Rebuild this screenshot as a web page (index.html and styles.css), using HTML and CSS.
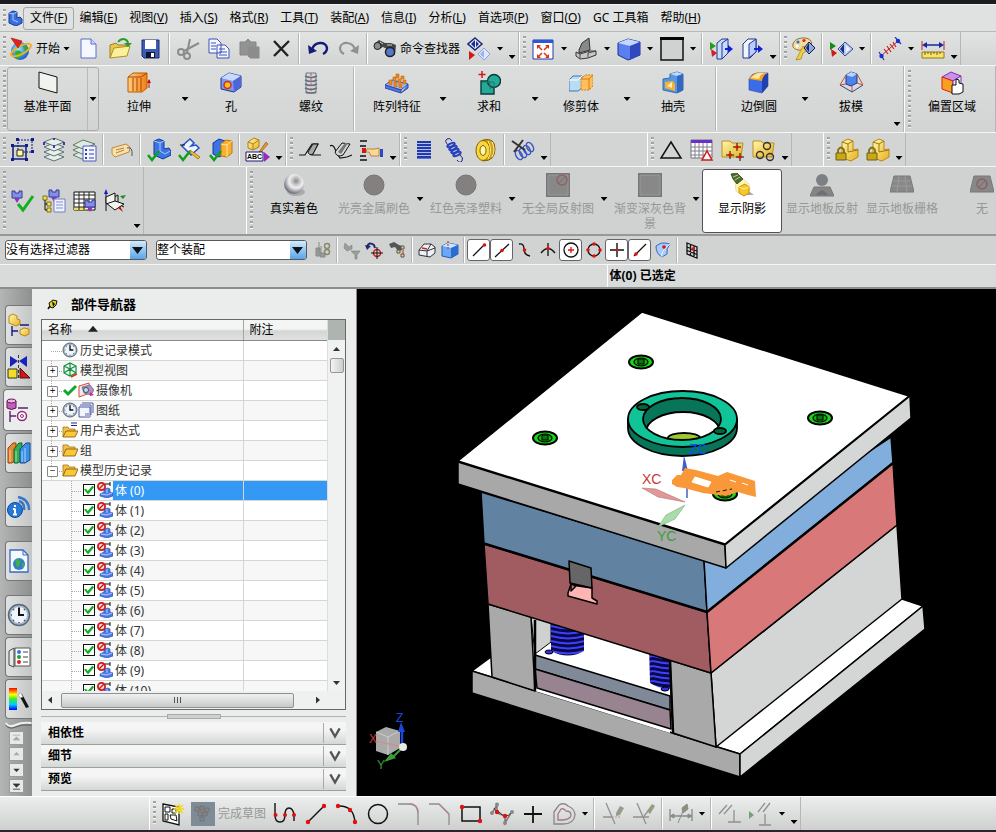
FILE: index.html
```html
<!DOCTYPE html>
<html lang="zh-CN">
<head>
<meta charset="utf-8">
<title>部件导航器</title>
<link rel="stylesheet" href="styles.css">
</head>
<body>
<svg class="sprite" aria-hidden="true">
<defs>
<linearGradient id="gBlue" x1="0" y1="0" x2="1" y2="1"><stop offset="0" stop-color="#b9d2ff"/><stop offset="1" stop-color="#2c50d8"/></linearGradient>
<linearGradient id="gGold" x1="0" y1="0" x2="1" y2="1"><stop offset="0" stop-color="#fff7b0"/><stop offset="1" stop-color="#e8b020"/></linearGradient>
<linearGradient id="gOrange" x1="0" y1="0" x2="1" y2="0"><stop offset="0" stop-color="#ffd080"/><stop offset="1" stop-color="#f08010"/></linearGradient>
<radialGradient id="gBall" cx=".6" cy=".35" r=".7"><stop offset="0" stop-color="#888"/><stop offset=".3" stop-color="#ccc"/><stop offset=".5" stop-color="#f0f0f0"/><stop offset="1" stop-color="#556"/></radialGradient>
<radialGradient id="gGlobe" cx=".4" cy=".4" r=".7"><stop offset="0" stop-color="#9fe8ff"/><stop offset="1" stop-color="#0848c8"/></radialGradient>
<linearGradient id="gRain" x1="0" y1="0" x2="0" y2="1"><stop offset="0" stop-color="#f00"/><stop offset=".3" stop-color="#ff0"/><stop offset=".5" stop-color="#3e3"/><stop offset=".75" stop-color="#0cf"/><stop offset="1" stop-color="#00f"/></linearGradient>
</defs>
<symbol id="app" viewBox="0 0 16 16"><path d="M2 3l4-2 4 1v6l3-1 2 2v4l-6 3-7-3z" fill="#3c6ee0" stroke="#123a98"/><path d="M2 3l4 1v6l5 2M6 4l4-2" fill="none" stroke="#a8c8ff"/></symbol>
<symbol id="start" viewBox="0 0 24 24"><circle cx="11" cy="14" r="9" fill="url(#gGlobe)"/><path d="M6 15c3-3 7-1 7 2s-4 6-6 4zM14 8l4 2 1 5-4-2z" fill="#27b32a"/><ellipse cx="12" cy="13" rx="11" ry="4" transform="rotate(-28 12 13)" fill="none" stroke="#f0b020" stroke-width="2"/><path d="M2 1l11 3-4 7z" fill="#e02418" stroke="#a01010" stroke-width=".6"/></symbol>
<symbol id="new" viewBox="0 0 24 24"><path d="M4 2h10l5 5v14H4z" fill="#f4f7ff" stroke="#5a6ec8"/><path d="M14 2v5h5" fill="#ccd8ff" stroke="#5a6ec8"/></symbol>
<symbol id="open" viewBox="0 0 24 24"><path d="M2 21V8l6-2 2 2h8v3" fill="#e8c850" stroke="#a08020"/><path d="M2 21l4-10 16-2-3 10z" fill="#fdf09a" stroke="#b09020"/><path d="M10 5c4-5 10-3 10 2" fill="none" stroke="#2a9a2a" stroke-width="2"/><path d="M16 6h8l-4 4z" fill="#2a9a2a"/></symbol>
<symbol id="save" viewBox="0 0 24 24"><path d="M3 3h17v18H5l-2-2z" fill="#3c5ab8" stroke="#1c2c70"/><path d="M6 3h11v9H6z" fill="#fff"/><path d="M7 15h9v6H7z" fill="#101830"/><path d="M12 16h3v4h-3z" fill="#fff"/></symbol>
<symbol id="cut" viewBox="0 0 24 24"><g fill="none" stroke="#8c8c8c" stroke-width="2"><path d="M14 2l-3 14M23 6L8 14"/><circle cx="5" cy="15" r="3"/><circle cx="11" cy="19" r="3"/></g></symbol>
<symbol id="copy" viewBox="0 0 24 24"><g fill="#f6f8ff" stroke="#3c50b8"><path d="M2 2h8l4 4v10H2zM10 8h8l4 4v9H10z"/><path d="M4 6h5M4 9h5M4 12h5M12 12h6M12 15h8M12 18h8"/></g></symbol>
<symbol id="paste" viewBox="0 0 24 24"><path d="M2 5h5l3-3 3 3h5v5h3v11h-9v-3H2z" fill="#929292" stroke="#848484"/><path d="M10 10h10v10H10z" fill="#8c8c8c"/></symbol>
<symbol id="del" viewBox="0 0 24 24"><path d="M5 4l14 15M20 4L5 19" stroke="#222" stroke-width="2.400" fill="none"/></symbol>
<symbol id="undo" viewBox="0 0 24 24"><path d="M6 13C8 4 20 4 21 11c0 3-2 5-4 6" fill="none" stroke="#141c78" stroke-width="2.400"/><path d="M2 8l1 9 8-3z" fill="#141c78"/></symbol>
<symbol id="redo" viewBox="0 0 24 24"><path d="M18 13C16 4 4 4 3 11c0 3 2 5 4 6" fill="none" stroke="#909090" stroke-width="2.200"/><path d="M22 8l-1 9-8-3z" fill="#909090"/></symbol>
<symbol id="find" viewBox="0 0 24 24"><path d="M1 7l5-4 6 3 6 0 5 2-1 10-5 1-3-7-4-2-6 3z" fill="#444"/><circle cx="4.500" cy="9" r="3.500" fill="#8c8c94" stroke="#222"/><circle cx="17" cy="15" r="4.500" fill="#5878d0" stroke="#222" stroke-width="1.500"/><path d="M7 5l3 2M14 8l5 0" stroke="#ccc"/></symbol>
<symbol id="swap" viewBox="0 0 24 24"><path d="M8 1l7 6-7 6-7-6z" fill="#e8f0ff" stroke="#182878" stroke-width="1.500"/><path d="M8 3l-4 4 4 4zM9 4v6l3-3z" fill="#1a2c90"/><path d="M17 11l6 6-6 6-6-6z" fill="#dfe8ff" stroke="#8aa0e8"/><path d="M17 13v8l-4-4z" fill="#9ab0f0"/><path d="M2 14l6 4-6 5z" fill="#d01818"/></symbol>
<symbol id="fit" viewBox="0 0 24 24"><path d="M2 3h20v19H2z" fill="#fff" stroke="#2038b0"/><path d="M2 3h20v3H2z" fill="#2858d8"/><path d="M7 9l4 4M17 9l-4 4M7 20l4-4M17 20l-4-4" fill="none" stroke="#e03010" stroke-width="1.500"/><path d="M6 8h4l-4 4zM18 8h-4l4 4zM6 21h4l-4-4zM18 21h-4l4-4z" fill="#e03010"/></symbol>
<symbol id="section" viewBox="0 0 24 24"><path d="M5 13l3-7 7-5 1 12-11 3z" fill="#888" stroke="#333"/><path d="M2 15l4 2 10-3 6 0v4l-8 3-8 1-4-3z" fill="#c8c8c8" stroke="#333"/><path d="M6 17v4M14 20v-4l8-2" fill="none" stroke="#444"/></symbol>
<symbol id="cube" viewBox="0 0 24 24"><path d="M1 6l10-4 12 3v13l-12 5L1 18z" fill="#5a80f0" stroke="#1c3090"/><path d="M1 6l12 3 10-4-12-3z" fill="#c4d8ff"/><path d="M13 9l10-4v13l-10 5z" fill="#3048c0"/></symbol>
<symbol id="bgwin" viewBox="0 0 24 24"><path d="M1 1h22v22H1z" fill="#d0d2d2" stroke="#111" stroke-width="1.500"/><path d="M0 0h24v3H0z" fill="#050505"/></symbol>
<symbol id="planeA" viewBox="0 0 24 24"><path d="M1 5l6 4-6 4z" fill="#20a020"/><path d="M2 12l6 4-5 4z" fill="#d02020"/><path d="M8 6l5-4h6v14l-6 6H8z" fill="#c8dcff" stroke="#24348c"/><path d="M13 22V6l6-4" fill="none" stroke="#24348c"/><path d="M16 12h5" stroke="#1020d0" stroke-width="2"/><path d="M19 8l5 4-5 4z" fill="#1020d0"/></symbol>
<symbol id="planeB" viewBox="0 0 24 24"><path d="M3 7l5-5h8v13l-6 6H3z" fill="#f0f4ff" stroke="#24348c"/><path d="M9 21V7l7-5v13z" fill="#b8ccff" stroke="#24348c"/><path d="M14 12h5" stroke="#1020d0" stroke-width="2"/><path d="M18 8l5 4-5 4z" fill="#1020d0"/></symbol>
<symbol id="palette" viewBox="0 0 24 24"><path d="M1 7C2 1 14-1 18 3c4 4 0 8-5 8-3 0-3 3-7 2S0 10 1 7z" fill="#f0dca0" stroke="#907030"/><circle cx="6" cy="5" r="1.600" fill="#2a70e0"/><circle cx="12" cy="3.500" r="1.600" fill="#e02020"/><circle cx="5" cy="9" r="1.500" fill="#fff"/><path d="M11 9l6 4-6 3-2 6-5 1 4-8z" fill="#f0d040" stroke="#a08010" stroke-width=".7"/><path d="M17 5l6 6-6 6-5-6z" fill="#90a8e0" stroke="#101850"/><path d="M17 6v9l-3-4z" fill="#182868"/></symbol>
<symbol id="showhide" viewBox="0 0 24 24"><path d="M1 5l6 4-6 4z" fill="#108c18"/><path d="M2 12l6 4-5 4z" fill="#d01818"/><path d="M16 5l8 7-8 7-7-7z" fill="#b8ccf8" stroke="#404c80"/><path d="M15 7v10l-4-5z" fill="#1c3090"/><path d="M17 8l4 4-4 4z" fill="#f0f4ff"/></symbol>
<symbol id="sketchline" viewBox="0 0 24 24"><path d="M3 19L20 4" stroke="#c82020"/><path d="M6 12l4 5M9 9l4 6M12 7l4 5M15 5l3 5" stroke="#c82020" stroke-width="1.200"/><path d="M1 15l5 8M17 0l6 7" stroke="#2030c0" stroke-width="1.200"/><circle cx="3.500" cy="19" r="2.200" fill="#1830d0"/><circle cx="20" cy="4" r="2.200" fill="#1830d0"/></symbol>
<symbol id="measure" viewBox="0 0 24 24"><path d="M1 4v9M23 4v9" stroke="#c82020"/><path d="M3 8h18" stroke="#1428a0" stroke-width="1.500"/><path d="M1 8l5-3v6zM23 8l-5-3v6z" fill="#1428a0"/><path d="M1 15h22v6H1z" fill="#f8e468" stroke="#907818"/><path d="M4 15v3M7 15v2M10 15v3M13 15v2M16 15v3M19 15v2" stroke="#705810"/></symbol>
<symbol id="datum" viewBox="0 0 24 24"><path d="M3 1l18 5v16L3 17z" fill="#f0f4ee" stroke="#111"/></symbol>
<symbol id="extrude" viewBox="0 0 24 24"><path d="M1 6l5-4h14v15l-5 4H1z" fill="url(#gOrange)" stroke="#c05800"/><path d="M1 6h13l6-4M6 7v13M10 7v13M14 7v13" fill="none" stroke="#b04008"/><path d="M22 17V9" stroke="#c01010"/><path d="M20 12l2-4 2 4z" fill="#c01010"/></symbol>
<symbol id="hole" viewBox="0 0 24 24"><path d="M2 7l8-5 12 3v11l-7 5L2 18z" fill="#7898f4" stroke="#20308c"/><path d="M2 7l12 3 8-5-12-3z" fill="#c8d8ff"/><path d="M14 10l8-5v11l-7 5z" fill="#4c68d8"/><circle cx="8.500" cy="14" r="3.500" fill="#f8c020" stroke="#d03010" stroke-width="1.500"/></symbol>
<symbol id="thread" viewBox="0 0 24 24"><path d="M7 2h10v20H7z" fill="#d4d8dc" stroke="#707888"/><path d="M6 5q6 3 12 0M6 9q6 3 12 0M6 13q6 3 12 0M6 17q6 3 12 0M7 21q5 2 10 0" fill="none" stroke="#687080" stroke-width="1.500"/><path d="M12 2v19" stroke="#d05050" stroke-dasharray="3 2"/></symbol>
<symbol id="pattern" viewBox="0 0 24 24"><path d="M0 14l7-5 16 4-7 6z" fill="#a0c0ff" stroke="#2848b0"/><path d="M0 14v3l16 5v-3zM16 22l7-5v-4" fill="#5078e0" stroke="#2848b0"/><g fill="#f08818" stroke="#c06810" stroke-width=".6"><path d="M4 9h3v5H4zM9 11h3v5H9zM14 13h3v4h-3zM8 6h3v4H8zM13 8h3v4h-3zM18 9h3v4h-3zM11 3h3v4h-3zM16 5h3v3h-3z"/></g></symbol>
<symbol id="unite" viewBox="0 0 24 24"><path d="M4 10h13v13H4z" fill="#28a898" stroke="#063c38" stroke-width="1.400"/><circle cx="17" cy="10" r="6.500" fill="#28a898" stroke="#063c38" stroke-width="1.400"/><path d="M5 11h8v7M10 11h7v6" fill="none" stroke="#187868"/><path d="M5 0v7M1.500 3.500h7" stroke="#d01818" stroke-width="1.500"/></symbol>
<symbol id="trim" viewBox="0 0 24 24"><path d="M0 9l4-4h9v12l-4 3H0z" fill="#b8dcf4" stroke="#3878b0"/><path d="M0 9h9l4-4" fill="none" stroke="#fff"/><path d="M12 8l4-4h8v11l-4 4h-8z" fill="#fcc060" stroke="#e07810" stroke-dasharray="2 1"/><path d="M12 8h8l4-4M20 8v11" fill="none" stroke="#e07810"/></symbol>
<symbol id="shell" viewBox="0 0 24 24"><path d="M2 8l7-1V3l7-2 6 2v16l-6 3-14-3z" fill="#5898e0" stroke="#3468b0"/><path d="M9 3l7-2 6 2-6 2z" fill="#b8dcff"/><path d="M16 5l6-2v16l-6 3z" fill="#3468c0"/><path d="M4 11l8-1 2 3v7L4 17z" fill="#f8b030"/><path d="M6 15l5-4v6z" fill="#fff0c0"/></symbol>
<symbol id="blend" viewBox="0 0 24 24"><path d="M2 8q3-6 8-6h11v13l-6 7-13-3z" fill="#3a6ce8" stroke="#3458b0" stroke-width=".7"/><path d="M2 8q3-5 8-6h11q-5 2-6 8z" fill="#f8a020"/><path d="M4 7q3-4 8-5h6q-5 1-6 6z" fill="#ffe890"/><path d="M15 10q1-6 6-8v13l-6 7z" fill="#2040b0"/></symbol>
<symbol id="draft" viewBox="0 0 24 24"><path d="M7 4l5-3 6 2v9l-6 3-5-2z" fill="#4c84e8" stroke="#1c3890"/><path d="M7 4l6 2 5-3-6-2z" fill="#b8d4ff"/><path d="M7 4L1 14M18 3l6 11M13 15v6M1 14l6-1M24 14l-6-2" fill="none" stroke="#c85030"/><path d="M1 14l12 7 11-7" fill="none" stroke="#304890"/></symbol>
<symbol id="offset" viewBox="0 0 24 24"><path d="M2 6l9-5 10 4-8 5z" fill="#c890e8" stroke="#8030b0"/><path d="M2 6l11 4v12L2 18z" fill="#f8a020" stroke="#e02010"/><path d="M13 10l8-5v10l-8 7z" fill="#e8e8f0" stroke="#8030b0"/><path d="M12 14h4V8l3 1v3l4 1v8l-4 2h-7z" fill="#fff" stroke="#111"/></symbol>
<symbol id="wave" viewBox="0 0 24 24"><path d="M7 2h14v12H7z" fill="none" stroke="#101c70" stroke-dasharray="2 1"/><path d="M2 8h13v13H2z" fill="none" stroke="#101c70" stroke-width="1.500"/><path d="M6 12h6v6H6z" fill="#fff8a0" stroke="#222"/><g fill="#101c90"><path d="M5 0h3v3H5zM20 0h3v3h-3zM20 12h3v3h-3zM0 6h3v3H0zM14 6h3v3h-3zM0 20h3v3H0zM14 20h3v3h-3z"/></g></symbol>
<symbol id="layers" viewBox="0 0 24 24"><g fill="#e4f0e8" stroke="#607078"><path d="M2 19l10-4 10 4-10 4z"/><path d="M2 14l10-4 10 4-10 4z"/><path d="M2 9l10-4 10 4-10 4z"/><path d="M2 4l10-4 10 4-10 4z"/></g><path d="M2 4v3M22 4v3M12 0v2M12 7v3" stroke="#5030b0" stroke-width="2"/></symbol>
<symbol id="layerset" viewBox="0 0 24 24"><g fill="#dcece0" stroke="#607868"><path d="M0 17l9-4 9 4-9 4z"/><path d="M0 12l9-4 9 4-9 4z"/><path d="M0 7l10-5 12 4-12 5z"/></g><path d="M10 8h13v15H10z" fill="#f4f6ff" stroke="#5058c0"/><path d="M12 11h2v2h-2zM12 15h2v2h-2zM12 19h2v2h-2z" fill="#3040b0"/><path d="M16 12h5M16 16h5M16 20h5" stroke="#3040b0"/></symbol>
<symbol id="tag" viewBox="0 0 24 24"><path d="M2 10l14-4 4 3-1 5-14 5-3-3z" fill="#fae0a8" stroke="#c08840"/><path d="M6 12l8-2M6 15l8-3" stroke="#b08040"/><path d="M17 10q6-2 5 8" fill="none" stroke="#555"/></symbol>
<symbol id="assyok" viewBox="0 0 24 24"><path d="M7 3l5-2 5 2v8l5-1 2 3v4l-8 4-9-4z" fill="#3c74e4" stroke="#12389c"/><path d="M7 3l6 2v8l5 3 5-3M13 5l4-2" fill="none" stroke="#a8c8ff"/><path d="M1 17l4 5 7-9" fill="none" stroke="#10a020" stroke-width="2.500"/></symbol>
<symbol id="assyedit" viewBox="0 0 24 24"><path d="M4 8l8-7 4 4-3 3 5-1 3 3-8 7z" fill="#eef4ff" stroke="#2850c8" stroke-width="1.500"/><path d="M12 12l10 7-2 2-9-7z" fill="#f0c030" stroke="#906010" stroke-width=".7"/><path d="M2 7h5" stroke="#111"/><path d="M1 17l4 5 7-9" fill="none" stroke="#10a020" stroke-width="2.500"/></symbol>
<symbol id="assyblock" viewBox="0 0 24 24"><path d="M4 5l6-4 6 2v13l-6 3-6-3z" fill="#3c74e4" stroke="#12389c"/><path d="M12 6l5-4 6 1v12l-5 4-6-1z" fill="#f8b030" stroke="#c07808"/><path d="M12 6l6 1 5-4M18 7v12" fill="none" stroke="#ffe8a0"/><path d="M1 17l4 5 7-9" fill="none" stroke="#10a020" stroke-width="2.500"/></symbol>
<symbol id="cyl1" viewBox="0 0 24 24"><path d="M1 17h6l7-11h6l-6 11h9" fill="#e4e4e4" stroke="#111" stroke-width="1.200"/><path d="M10 14l5-8 5 0-5 10q-4 2-5-2z" fill="#a8a8a8" stroke="#111"/></symbol>
<symbol id="cyl2" viewBox="0 0 24 24"><path d="M1 8q3-2 5 3t5 9l7-1 5-2" fill="none" stroke="#111" stroke-width="1.200"/><path d="M6 14l7-9 8 1-7 11q-6 3-8-3z" fill="#d8d8d8" stroke="#111"/><path d="M9 14l7-9h3l-7 11z" fill="#777"/></symbol>
<symbol id="hand" viewBox="0 0 24 24"><path d="M0 3h7M0 8h6M0 18h6M0 22h7" stroke="#111" stroke-width="1.500"/><path d="M2 10h4v5H2z" fill="#d01818"/><path d="M7 11h8l4-1v8h-8l-2-4H6z" fill="#fcd898" stroke="#a87028" stroke-width=".8"/><path d="M20 11h3v8h-3z" fill="#2848c8"/></symbol>
<symbol id="coil" viewBox="0 0 24 24"><path d="M5 3h14v18H5z" fill="#5878e0"/><path d="M5 4h14M5 7h14M5 10h14M5 13h14M5 16h14M5 19h14" stroke="#14248c" stroke-width="1.500"/><path d="M5 5.500h14M5 8.500h14M5 11.500h14M5 14.500h14M5 17.500h14" stroke="#a8c0ff"/></symbol>
<symbol id="spring" viewBox="0 0 24 24"><path d="M5 7q-4-4-1-6t5 2" fill="none" stroke="#14248c"/><g fill="none" stroke="#2840c0" stroke-width="2"><ellipse cx="8" cy="7" rx="4" ry="1.500" transform="rotate(-25 8 7)"/><ellipse cx="10" cy="10" rx="4" ry="1.500" transform="rotate(-25 10 10)"/><ellipse cx="12" cy="13" rx="4" ry="1.500" transform="rotate(-25 12 13)"/><ellipse cx="14" cy="16" rx="4" ry="1.500" transform="rotate(-25 14 16)"/></g><path d="M17 17q4 3 2 6t-5-1" fill="none" stroke="#14248c"/></symbol>
<symbol id="disc" viewBox="0 0 24 24"><path d="M9 2q12-3 12 9t-12 12z" fill="#d8a010" stroke="#806000"/><ellipse cx="9" cy="12.500" rx="7" ry="10" fill="#f8d838" stroke="#806000"/><ellipse cx="9" cy="12.500" rx="3" ry="5" fill="#fff6b0" stroke="#806000"/><path d="M14 3q5 9 0 18M18 4q4 8 0 15" fill="none" stroke="#fff0a0"/></symbol>
<symbol id="springx" viewBox="0 0 24 24"><g fill="none" stroke="#3c58c0" stroke-width="1.500"><ellipse cx="8" cy="17" rx="3" ry="5" transform="rotate(-30 8 17)"/><ellipse cx="12" cy="15" rx="3" ry="5" transform="rotate(-30 12 15)"/><ellipse cx="16" cy="12" rx="3" ry="5" transform="rotate(-30 16 12)"/><ellipse cx="19" cy="9" rx="3" ry="5" transform="rotate(-30 19 9)"/></g><path d="M1 3l13 9M12 2L3 14" stroke="#333" stroke-width="2"/></symbol>
<symbol id="tri" viewBox="0 0 24 24"><path d="M12 4l10 16H2z" fill="none" stroke="#111" stroke-width="1.500"/></symbol>
<symbol id="tabletri" viewBox="0 0 24 24"><path d="M1 2h21v18H1z" fill="#fff" stroke="#707078"/><path d="M1 2h21v3H1z" fill="#6830c8"/><path d="M1 9h21M1 13h21M1 17h21M5 5v15M9 5v15M13 5v15M17 5v15" stroke="#808088"/><path d="M17 13l5 9H12z" fill="#fff" stroke="#d01818" stroke-width="1.500"/></symbol>
<symbol id="folderpts" viewBox="0 0 24 24"><path d="M1 3h8l2 2h11l-2 14H1z" fill="url(#gGold)" stroke="#b89020"/><path d="M16 5v8M12 9h8M9 13v8M5 17h8M19 15v8M15 19h8" stroke="#111"/><circle cx="16" cy="9" r="1.800" fill="#e01010"/><circle cx="9" cy="17" r="1.800" fill="#e01010"/><circle cx="19" cy="19" r="1.800" fill="#e01010"/></symbol>
<symbol id="foldercir" viewBox="0 0 24 24"><path d="M1 3h8l2 2h11l-2 14H1z" fill="url(#gGold)" stroke="#b89020"/><g fill="none" stroke="#333" stroke-width="1.400"><circle cx="15" cy="8" r="3.500"/><circle cx="8" cy="17" r="3.500"/><circle cx="18" cy="19" r="3.500"/></g></symbol>
<symbol id="lockbox" viewBox="0 0 24 24"><path d="M7 4l6-3 5 2v9l5-1v8l-7 4-9-3z" fill="url(#gGold)" stroke="#b88810"/><path d="M7 4l6 2 5-3M13 6v8l10-2" fill="none" stroke="#a07808"/><path d="M3 15v-3q3-5 6 0v3" fill="none" stroke="#807010" stroke-width="1.800"/><path d="M1 15h10v7H1z" fill="#c8a818" stroke="#706008"/></symbol>
<symbol id="plugok" viewBox="0 0 24 24"><path d="M1 2h3v2h4V2h3v7H1z" fill="#8090e8" stroke="#303c90"/><path d="M3 9h6l-3 5z" fill="#9030c0"/><path d="M7 15l5 6L22 7" fill="none" stroke="#10b020" stroke-width="3"/></symbol>
<symbol id="plugtree" viewBox="0 0 24 24"><path d="M7 1h3v2h4V1h3v7H7z" fill="#8090e8" stroke="#303c90"/><path d="M9 8h6l-3 5z" fill="#9030c0"/><path d="M1 7h4v4H1zM5 13h4v4H5zM5 19h4v4H5z" fill="#f0e060" stroke="#807010"/><path d="M3 11v10h2M3 15h2" fill="none" stroke="#111"/><path d="M12 10h11v13H12z" fill="#f0f2ff" stroke="#7080c8"/><path d="M14 13h7M14 16h7M14 19h7" stroke="#8090d0"/></symbol>
<symbol id="plugtable" viewBox="0 0 24 24"><path d="M1 3h21v18H1z" fill="#fff" stroke="#111"/><path d="M1 18h12v3H1z" fill="#f0e060"/><path d="M1 6h21M1 10h21M1 14h21M1 18h21M6 3v18M11 3v18M16 3v18" stroke="#222"/><path d="M12 11h3v2h4v-2h3v7H12z" fill="#8090e8" stroke="#303c90"/><path d="M14 18h6l-3 5z" fill="#9030c0"/></symbol>
<symbol id="csys" viewBox="0 0 24 24"><path d="M2 22V3M2 12l12-6v9l6 3" fill="none" stroke="#111"/><path d="M2 8l9-4v8l9 3-9 6-9-7z" fill="#f0f4ec" stroke="#111"/><path d="M11 12l-9 3" stroke="#111"/><path d="M2 0L0 5h4z" fill="#1020d0"/><path d="M22 6l-6 1 3 3z" fill="#109020"/><path d="M19 23l-5-4 2-2z" fill="#c01010"/></symbol>
<symbol id="ball" viewBox="0 0 24 24"><ellipse cx="14" cy="19" rx="9" ry="4" fill="#aaa"/><circle cx="12" cy="11" r="10" fill="url(#gBall)"/></symbol>
<symbol id="sphere" viewBox="0 0 24 24"><circle cx="12" cy="12" r="10" fill="#858080" stroke="#747474"/></symbol>
<symbol id="square" viewBox="0 0 24 24"><path d="M0 0h24v24H0z" fill="#777"/><path d="M2 2h20v20H2z" fill="#888" stroke="#999"/></symbol>
<symbol id="squareno" viewBox="0 0 24 24"><path d="M0 0h24v24H0z" fill="#777"/><path d="M2 2h20v20H2z" fill="#888" stroke="#999"/><circle cx="16" cy="7" r="5" fill="none" stroke="#8c6464" stroke-width="1.500"/><path d="M12 11l8-8" stroke="#8c6464"/></symbol>
<symbol id="bulb" viewBox="0 0 24 24"><path d="M12 22h12l-4-3z" fill="#aaa"/><path d="M5 9l8-3 6 5 1 7-7 4-7-4z" fill="#fff6b0" stroke="#d8d080" stroke-width=".6"/><path d="M1 1l6-1 6 6-6 5-4-5z" fill="#4c6c30" stroke="#2c4818" stroke-width=".8"/><path d="M3 4l5-2M5 7l5-3" stroke="#b8d088"/><path d="M9 14l6-3 4 3v6l-5 3-5-3z" fill="#f8c828" stroke="#c89010"/><path d="M9 14l5 2 5-2" fill="none" stroke="#fff0a0"/></symbol>
<symbol id="reflect" viewBox="0 0 24 24"><circle cx="12" cy="7" r="6" fill="#7c8084"/><path d="M4 14h16l4 9H0z" fill="#858585" stroke="#777"/><path d="M6 22q6-9 12 0z" fill="#6c7078"/></symbol>
<symbol id="floorgrid" viewBox="0 0 24 24"><path d="M4 3h16l4 16H0z" fill="#888" stroke="#777"/><path d="M3 8h18M2 13h20M9 3L7 19M15 3l2 16" stroke="#9a9a9a"/></symbol>
<symbol id="floorno" viewBox="0 0 24 24"><path d="M4 3h16l4 16H0z" fill="#888" stroke="#777"/><circle cx="12" cy="11" r="5" fill="none" stroke="#8c6060" stroke-width="1.500"/><path d="M9 14l7-7" stroke="#8c6060"/></symbol>
<symbol id="f1" viewBox="0 0 20 20"><path d="M3 8h4v8H3zM8 6v8M6 2v10M7 13h5v4H7" fill="#999" stroke="#8a8a8a"/><circle cx="14" cy="6" r="2.500" fill="none" stroke="#8a8a70" stroke-width="1.500"/><circle cx="14" cy="12" r="2.500" fill="none" stroke="#8a8a70" stroke-width="1.500"/></symbol>
<symbol id="f2" viewBox="0 0 20 20"><path d="M3 3l4 4 3-2v4l-5 2-3-3zM9 11h9l-3 4v4h-2v-4z" fill="#98a098" stroke="#808080" stroke-width=".6"/></symbol>
<symbol id="f3" viewBox="0 0 20 20"><path d="M2 7q2-6 7-2l1 3" fill="none" stroke="#202870" stroke-width="2"/><path d="M0 5l6 1-4 4z" fill="#202870"/><circle cx="12" cy="13" r="3.500" fill="none" stroke="#d01818" stroke-width="1.500"/><path d="M12 7v12M6 13h12" stroke="#111"/></symbol>
<symbol id="f4" viewBox="0 0 20 20"><path d="M1 4l5-2 5 3 3 1v4l-4 1-3-4-4 1z" fill="#555"/><path d="M13 6h3v3h-3zM13 14h3v3h-3zM9 10h3v3H9z" fill="#e8dc60" stroke="#555"/><path d="M15 10v4" stroke="#d02020"/></symbol>
<symbol id="f5" viewBox="0 0 20 20"><path d="M2 10l5-6h7l4 3v6l-5 4-11-2z" fill="#eef2f8" stroke="#333"/><path d="M2 10l8 1 4-7M10 11v6M10 11l8-3" fill="none" stroke="#333"/><path d="M5 8l5 1" stroke="#d02020" stroke-width="1.500"/></symbol>
<symbol id="f6" viewBox="0 0 20 20"><path d="M2 6l6-3 10 2v9l-7 4-9-2z" fill="#68a8f8" stroke="#2858b0"/><path d="M2 6l9 2 7-3-10-2z" fill="#c8e4ff"/><path d="M11 8l7-3v9l-7 4z" fill="#2c6cd0"/><path d="M8 1v8" stroke="#d02020" stroke-dasharray="2 1"/></symbol>
<symbol id="s1" viewBox="0 0 20 20"><path d="M4 16L15 5" stroke="#111" stroke-width="1.300"/><circle cx="15.500" cy="5" r="1.800" fill="#e01010"/></symbol>
<symbol id="s2" viewBox="0 0 20 20"><path d="M3 17L17 4" stroke="#111" stroke-width="1.300"/><circle cx="10" cy="10.500" r="1.800" fill="#e01010"/></symbol>
<symbol id="s3" viewBox="0 0 20 20"><path d="M4 4q5-1 5 5t6 7" fill="none" stroke="#111" stroke-width="1.300"/><circle cx="9.500" cy="10" r="1.800" fill="#e01010"/></symbol>
<symbol id="s4" viewBox="0 0 20 20"><path d="M10 3v13M3 13q7-9 14 0" fill="none" stroke="#111" stroke-width="1.300"/><circle cx="10" cy="8.500" r="1.800" fill="#e01010"/></symbol>
<symbol id="s5" viewBox="0 0 20 20"><circle cx="10" cy="10" r="7" fill="none" stroke="#111" stroke-width="1.300"/><path d="M10 7v6M7 10h6" stroke="#e01010" stroke-width="1.300"/></symbol>
<symbol id="s6" viewBox="0 0 20 20"><circle cx="10" cy="10" r="6" fill="none" stroke="#111" stroke-width="1.300"/><g fill="#e01010"><circle cx="10" cy="4" r="1.800"/><circle cx="10" cy="16" r="1.800"/><circle cx="4" cy="10" r="1.800"/><circle cx="16" cy="10" r="1.800"/></g></symbol>
<symbol id="s7" viewBox="0 0 20 20"><path d="M10 3v14M3 10h14" stroke="#111" stroke-width="1.400"/><circle cx="10" cy="10" r="1.500" fill="#e01010"/></symbol>
<symbol id="s8" viewBox="0 0 20 20"><path d="M4 16L16 4" stroke="#111" stroke-width="1.300"/><circle cx="6" cy="14" r="1.800" fill="#e01010"/></symbol>
<symbol id="s9" viewBox="0 0 20 20"><path d="M3 6q5-4 9-3l5 1q-4 4-3 10l-5 3q-6-3-6-11z" fill="#a8ccf8" stroke="#3868c0"/><path d="M9 17q-2-5 8-13" fill="none" stroke="#e8f4ff"/><circle cx="11" cy="7" r="1.800" fill="#e01010"/></symbol>
<symbol id="s10" viewBox="0 0 20 20"><path d="M5 3l10 4v11L5 14zM8.500 4v12M12 5.500V17M5 7l10 4M5 10.500l10 4" fill="none" stroke="#111" stroke-width="1.300"/><circle cx="11" cy="9" r="1.800" fill="#e01010"/></symbol>
<symbol id="pin" viewBox="0 0 12 12"><path d="M2 5l4-3 4 1-1 4-3 3-3-1z" fill="#e8d820" stroke="#111"/><path d="M5 3l3 3-2 3" fill="#111"/><path d="M3 8l-2 3" stroke="#111" stroke-width="1.500"/></symbol>
<symbol id="tabassy" viewBox="0 0 24 24"><path d="M2 3l4-2 4 2v3l3 1v4l-4 2-7-3z" fill="url(#gGold)" stroke="#b88810"/><path d="M13 17l4-2 5 1v5l-4 2-5-2z" fill="url(#gGold)" stroke="#b88810"/><path d="M5 13v10M5 18h6M13 12h9" stroke="#181880" stroke-width="1.400"/></symbol>
<symbol id="tabcons" viewBox="0 0 24 24"><path d="M3 1l8 5-8 6zM20 1l-8 5 8 6z" fill="#1820c0"/><path d="M11.500 0v24" stroke="#333" stroke-dasharray="3 2"/><path d="M1 14h9v9H1z" fill="#f0e020" stroke="#333"/><path d="M13 13l10 10H13z" fill="#d01818" stroke="#501010"/></symbol>
<symbol id="tabpart" viewBox="0 0 24 24"><path d="M1 3v7q4 3 9 0V3z" fill="#c060b8" stroke="#601858"/><ellipse cx="5.500" cy="3" rx="4.500" ry="2" fill="#f0b0e8" stroke="#601858"/><path d="M4 13v11M4 18h6M12 10h10" stroke="#602070" stroke-width="1.400"/><circle cx="16" cy="18" r="4.500" fill="#fff" stroke="#902878" stroke-width="1.500"/><circle cx="16" cy="18" r="1.500" fill="none" stroke="#902878"/></symbol>
<symbol id="books" viewBox="0 0 24 24"><path d="M1 7l5-5h3v16l-4 4H1z" fill="#e88830" stroke="#904008"/><path d="M7 8l5-6h3v16l-4 4H7z" fill="#30b050" stroke="#106028"/><path d="M13 8l6-6h4v17l-5 3h-5z" fill="#3890e8" stroke="#104888"/><path d="M3 9v12M9 10v11M15 10v11M18 7v14" stroke="#fff" opacity=".6"/></symbol>
<symbol id="info" viewBox="0 0 24 24"><circle cx="8" cy="15" r="7.500" fill="#2878d8" stroke="#0c4898"/><path d="M8 10v2M8 13.500v6M6 14h2M6 19.500h4" stroke="#fff" stroke-width="2"/><path d="M12 6q6 2 5 9M11 2q11 2 11 13" fill="none" stroke="#3878c8" stroke-width="2.500"/></symbol>
<symbol id="webpage" viewBox="0 0 24 24"><path d="M3 1h13l5 5v17H3z" fill="#f4f8ff" stroke="#3868c0" stroke-width="1.300"/><path d="M16 1v5h5" fill="none" stroke="#3868c0"/><circle cx="12" cy="15" r="6" fill="#3080c8"/><path d="M8 12q4-4 5 0t-3 6zM15 14l3 1-3 4z" fill="#40b048"/></symbol>
<symbol id="clock" viewBox="0 0 24 24"><circle cx="12" cy="12" r="10.500" fill="#a8b8c8" stroke="#586878" stroke-width="1.500"/><circle cx="12" cy="12" r="8" fill="#eef4fa"/><path d="M12 5v7h5" fill="none" stroke="#111" stroke-width="2"/><path d="M12 4v1M12 19v1M4 12h1M6 6l1 1M18 18l-1-1M6 18l1-1M18 6l-1 1" stroke="#456" stroke-width="1.500"/></symbol>
<symbol id="roles" viewBox="0 0 24 24"><path d="M8 3h15v18H8z" fill="#fff" stroke="#555"/><path d="M2 6l5-3v19l-5-2z" fill="#e8e8e8" stroke="#444"/><circle cx="12" cy="7" r="2" fill="#2878e0"/><circle cx="12" cy="12" r="2" fill="#20a030"/><circle cx="12" cy="17" r="2" fill="#e02020"/><path d="M16 7h5M16 12h5M16 17h5" stroke="#444"/></symbol>
<symbol id="rainbow" viewBox="0 0 24 24"><path d="M2 1h8v22H2z" fill="url(#gRain)"/><path d="M12 8l3-1 7 13-3 1z" fill="#111"/><path d="M11 7l3-1 2 4-3 1z" fill="#fff" stroke="#888" stroke-width=".5"/></symbol>
<symbol id="tview" viewBox="0 0 16 16"><path d="M2 4l6-3 6 3v7l-6 3-6-3zM2 4l6 3 6-3M8 1v13M2 11l6-4 6 4" fill="none" stroke="#109040" stroke-width="1.200"/><path d="M9 15l6-3" stroke="#e03010" stroke-width="1.500"/></symbol>
<symbol id="tcheck" viewBox="0 0 16 16"><path d="M2 8l4 4 8-8" fill="none" stroke="#10a828" stroke-width="3"/></symbol>
<symbol id="tcam" viewBox="0 0 16 16"><path d="M1 4l10-3 1 10-11 4z" fill="#f4e8f0" stroke="#d05030"/><path d="M4 5l8-2 4 5-3 5-7-2z" fill="#a890c0" stroke="#705090" stroke-width=".7"/><circle cx="8" cy="8" r="2.500" fill="#c8e0e8" stroke="#405060"/><path d="M12 10l4 3-4 1z" fill="#d020a0"/></symbol>
<symbol id="tdraw" viewBox="0 0 16 16"><path d="M4 1h11v10M2 3h11v10M1 5h11v10H1z" fill="#f2f4ff" stroke="#4c58a0"/><path d="M7 11h5v4H7z" fill="#a8b0d8"/></symbol>
<symbol id="tfolder" viewBox="0 0 16 16"><path d="M1 14V3h5l1 2h6v3" fill="#f0c048" stroke="#a87818" stroke-width=".8"/><path d="M1 14l3-7h12l-3 7z" fill="#f8c838" stroke="#805008" stroke-width=".8"/></symbol>
<symbol id="tfolderx" viewBox="0 0 16 16"><path d="M1 15V5h5l1 2h6v2" fill="#f0c048" stroke="#a87818" stroke-width=".8"/><path d="M1 15l3-6h12l-3 6z" fill="#f8c838" stroke="#805008" stroke-width=".8"/><path d="M9 1h6M9 3.500h6" stroke="#202880" stroke-width="1.200"/></symbol>
<symbol id="tbody" viewBox="0 0 16 16"><path d="M3 12l4-2V7l4-1 2 1v3l3 1v3l-6 2-7-2z" fill="#4878e8" stroke="#2848a8" stroke-width=".6"/><path d="M4 12l6 1 5-2M10 7v4" fill="none" stroke="#b8d0ff"/><path d="M8 2h5M13 0v4" stroke="#111"/><circle cx="4.500" cy="4.500" r="3.600" fill="#fbe0e0" stroke="#d01818" stroke-width="1.800"/><path d="M2 7l5-5" stroke="#d01818" stroke-width="1.500"/></symbol>
<symbol id="k1" viewBox="0 0 24 24"><path d="M2 2l16 3v18L2 19z" fill="#fff" stroke="#111" stroke-width="1.300"/><path d="M4 5h5v5H4zM11 7h4v4h-4zM4 12h3v6H4zM9 13h6l1 6-6-2z" fill="none" stroke="#111"/><path d="M18 2v10M13 7h10M14 3l8 8M22 3l-8 8" stroke="#f0d820" stroke-width="1.500"/></symbol>
<symbol id="k2" viewBox="0 0 24 24"><path d="M0 0h24v24H0z" fill="#7e8c98"/><path d="M4 5h4v4H4zM9 4h4v4H9zM14 6h4v4h-4zM7 10h4v4H7zM12 10h4v4h-4zM9 15h4v4H9z" fill="#8c8484" stroke="#6c7478"/></symbol>
<symbol id="k3" viewBox="0 0 24 24"><path d="M2 1v12q0 7 5 7t5-7q0-7 4-7t5 7v6" fill="none" stroke="#111" stroke-width="1.400"/><g fill="#e01010"><circle cx="2.500" cy="13" r="2"/><circle cx="12" cy="13" r="2"/><circle cx="21" cy="13" r="2"/></g></symbol>
<symbol id="k4" viewBox="0 0 24 24"><path d="M4 20L20 4" stroke="#111" stroke-width="1.400"/><g fill="#e01010"><circle cx="4" cy="20" r="2.200"/><circle cx="20" cy="4" r="2.200"/></g></symbol>
<symbol id="k5" viewBox="0 0 24 24"><path d="M3 4q16-1 17 17" fill="none" stroke="#111" stroke-width="1.400"/><g fill="#e01010"><circle cx="3" cy="4" r="2.200"/><circle cx="15" cy="8" r="2.200"/><circle cx="20" cy="20" r="2.200"/></g></symbol>
<symbol id="k6" viewBox="0 0 24 24"><circle cx="12" cy="12" r="9.500" fill="none" stroke="#111" stroke-width="1.500"/></symbol>
<symbol id="k7" viewBox="0 0 24 24"><path d="M1 2h11q9 0 9 9v12" fill="none" stroke="#8c8c8c" stroke-width="1.300"/><path d="M12 2q9 0 9 9" fill="none" stroke="#b08888" stroke-width="1.300"/></symbol>
<symbol id="k8" viewBox="0 0 24 24"><path d="M1 2h10l10 10v11" fill="none" stroke="#8c8c8c" stroke-width="1.300"/><path d="M11 2l10 10" fill="none" stroke="#b08888" stroke-width="1.300"/></symbol>
<symbol id="k9" viewBox="0 0 24 24"><path d="M3 5h18v14H3z" fill="none" stroke="#111" stroke-width="1.500"/><circle cx="3" cy="5" r="2.200" fill="#e01010"/><circle cx="21" cy="19" r="2.200" fill="#e01010"/></symbol>
<symbol id="k10" viewBox="0 0 24 24"><path d="M2 11L7 3v8l8 3v7l6-10" fill="none" stroke="#777" stroke-width="1.500"/><path d="M4 6q2 4 5 4 4 4 6 4 4 0 6-3" fill="none" stroke="#333"/><g fill="#888"><circle cx="2" cy="11" r="2"/><circle cx="7" cy="2.500" r="2"/><circle cx="15" cy="21" r="2"/><circle cx="22" cy="10" r="2"/></g><circle cx="7" cy="10" r="2.200" fill="#e01010"/><circle cx="15" cy="14" r="2.200" fill="#e01010"/></symbol>
<symbol id="k11" viewBox="0 0 24 24"><path d="M12 4v17M3 12h18" stroke="#111" stroke-width="1.800"/></symbol>
<symbol id="k12" viewBox="0 0 24 24"><path d="M2 10l5-7q5-3 9 1 7 3 7 9-1 9-12 9H2z" fill="none" stroke="#888" stroke-width="1.300"/><path d="M6 12l3-5q3-1 5 2 5 0 5 4t-8 5H6z" fill="none" stroke="#a07888" stroke-width="1.300"/></symbol>
<symbol id="k13" viewBox="0 0 24 24"><path d="M5 1l9 21M2 15h9" stroke="#909090" stroke-width="1.300"/><path d="M11 15l9 0" stroke="#b0a0a0" stroke-dasharray="2 1"/><path d="M15 11l4-7 4 2-4 7-4 1z" fill="#9a9a88"/></symbol>
<symbol id="k14" viewBox="0 0 24 24"><path d="M5 1l9 21M1 15h16M12 14l9-11" fill="none" stroke="#909090" stroke-width="1.300"/><path d="M15 9l5-7 3 2-5 8z" fill="#9a9a80"/></symbol>
<symbol id="k15" viewBox="0 0 24 24"><path d="M1 7v12M23 7v12M1 14h22" stroke="#888" stroke-width="1.300"/><path d="M1 14l4-2v4zM23 14l-4-2v4zM13 6l5-4 1 5-5 4zM14 9l-5 12" fill="#889080" stroke="#889080"/></symbol>
<symbol id="k16" viewBox="0 0 24 24"><path d="M1 12L9 3M6 12l8-9M16 8v12M10 20h13" stroke="#909090" stroke-width="1.300"/></symbol>
<symbol id="k17" viewBox="0 0 24 24"><path d="M0 9l5 4-5 4z" fill="#78a078"/><path d="M9 10l7-9M14 10l7-9M16 12v11M10 23h12" stroke="#909090" stroke-width="1.300"/></symbol>
</svg>

<div class="app">
<div class="titlestrip"></div>

<nav class="row menubar">
<i class="grip"></i><svg class="ic16"><use href="#app"/></svg>
<button class="menu on">文件(<u>F</u>)</button><button class="menu">编辑(<u>E</u>)</button><button class="menu">视图(<u>V</u>)</button><button class="menu">插入(<u>S</u>)</button><button class="menu">格式(<u>R</u>)</button><button class="menu">工具(<u>T</u>)</button><button class="menu">装配(<u>A</u>)</button><button class="menu">信息(<u>I</u>)</button><button class="menu">分析(<u>L</u>)</button><button class="menu">首选项(<u>P</u>)</button><button class="menu">窗口(<u>O</u>)</button><button class="menu">GC 工具箱</button><button class="menu">帮助(<u>H</u>)</button>
</nav>

<div class="row tools">
<div class="group"><i class="grip"></i>
<button class="start"><svg class="ic"><use href="#start"/></svg>开始<i class="caret"></i></button>
<button class="tool" aria-label="新建"><svg class="ic"><use href="#new"/></svg></button><button class="tool" aria-label="打开"><svg class="ic"><use href="#open"/></svg></button><button class="tool" aria-label="保存"><svg class="ic"><use href="#save"/></svg></button><i class="sep"></i>
<button class="tool" aria-label="剪切"><svg class="ic"><use href="#cut"/></svg></button><button class="tool" aria-label="复制"><svg class="ic"><use href="#copy"/></svg></button><button class="tool" aria-label="粘贴"><svg class="ic"><use href="#paste"/></svg></button><button class="tool" aria-label="删除"><svg class="ic"><use href="#del"/></svg></button><i class="sep"></i>
<button class="tool" aria-label="撤消"><svg class="ic"><use href="#undo"/></svg></button><button class="tool" aria-label="重做"><svg class="ic"><use href="#redo"/></svg></button><i class="sep"></i>
<button class="tool labeled"><svg class="ic"><use href="#find"/></svg>命令查找器</button><button class="tool" aria-label="切换"><svg class="ic"><use href="#swap"/></svg></button><button class="drop" aria-label="更多"></button><button class="drop over" aria-label="选项"></button>
</div>
<div class="group"><i class="grip"></i>
<button class="tool" aria-label="适合窗口"><svg class="ic"><use href="#fit"/></svg></button><button class="drop" aria-label="更多"></button><button class="tool" aria-label="截面"><svg class="ic"><use href="#section"/></svg></button><button class="drop" aria-label="更多"></button><button class="tool" aria-label="着色"><svg class="ic"><use href="#cube"/></svg></button><button class="drop" aria-label="更多"></button><button class="tool" aria-label="背景"><svg class="ic"><use href="#bgwin"/></svg></button><button class="drop" aria-label="更多"></button><i class="sep"></i>
<button class="tool" aria-label="编辑截面"><svg class="ic"><use href="#planeA"/></svg></button><button class="tool" aria-label="剪切截面"><svg class="ic"><use href="#planeB"/></svg></button><button class="drop over" aria-label="选项"></button>
</div>
<div class="group"><i class="grip"></i>
<button class="tool" aria-label="对象显示"><svg class="ic"><use href="#palette"/></svg></button><i class="sep"></i><button class="tool" aria-label="显示和隐藏"><svg class="ic"><use href="#showhide"/></svg></button><button class="drop" aria-label="更多"></button><i class="sep"></i>
<button class="tool" aria-label="曲线"><svg class="ic"><use href="#sketchline"/></svg></button><button class="drop" aria-label="更多"></button><button class="tool" aria-label="测量"><svg class="ic"><use href="#measure"/></svg></button><button class="drop over" aria-label="选项"></button>
</div>
</div>

<div class="row ribbon">
<div class="group"><i class="grip"></i>
<div class="split"><button class="big"><svg class="ic"><use href="#datum"/></svg>基准平面</button><button class="drop" aria-label="更多"></button></div>
<button class="big"><svg class="ic"><use href="#extrude"/></svg>拉伸</button><button class="drop" aria-label="更多"></button>
<button class="big"><svg class="ic"><use href="#hole"/></svg>孔</button><button class="big"><svg class="ic"><use href="#thread"/></svg>螺纹</button><i class="sep"></i>
<button class="big"><svg class="ic"><use href="#pattern"/></svg>阵列特征</button><button class="drop" aria-label="更多"></button>
<button class="big"><svg class="ic"><use href="#unite"/></svg>求和</button><button class="drop" aria-label="更多"></button>
<button class="big"><svg class="ic"><use href="#trim"/></svg>修剪体</button><button class="drop" aria-label="更多"></button>
<button class="big"><svg class="ic"><use href="#shell"/></svg>抽壳</button><i class="sep"></i>
<button class="big"><svg class="ic"><use href="#blend"/></svg>边倒圆</button><button class="drop" aria-label="更多"></button>
<button class="big"><svg class="ic"><use href="#draft"/></svg>拔模</button><button class="drop over" aria-label="选项"></button>
</div>
<div class="group grow"><i class="grip"></i><button class="big"><svg class="ic"><use href="#offset"/></svg>偏置区域</button></div>
</div>

<div class="row tools tools2">
<div class="group"><i class="grip"></i>
<button class="tool" aria-label="链接"><svg class="ic"><use href="#wave"/></svg></button><button class="tool" aria-label="图层"><svg class="ic"><use href="#layers"/></svg></button><button class="tool" aria-label="图层设置"><svg class="ic"><use href="#layerset"/></svg></button><i class="sep"></i><button class="tool" aria-label="标记"><svg class="ic"><use href="#tag"/></svg></button><i class="sep"></i>
<button class="tool" aria-label="装配检查"><svg class="ic"><use href="#assyok"/></svg></button><button class="tool" aria-label="编辑检查"><svg class="ic"><use href="#assyedit"/></svg></button><button class="tool" aria-label="块检查"><svg class="ic"><use href="#assyblock"/></svg></button><i class="sep"></i><button class="tool" aria-label="属性"><svg class="ic" viewBox="0 0 24 24"><path d="M2 4l6-4 5 2v7l-6 3-5-2z" fill="url(#gGold)" stroke="#b08010"/><path d="M2 4l5 2 6-4M7 6v6" fill="none" stroke="#b08010"/><path d="M20 4l2 2-7 8-2 0z" fill="#e89828" stroke="#804808" stroke-width=".6"/><path d="M0 14h17v9H0z" fill="#fff" stroke="#181878"/><text x="1" y="21" class="abc">ABC</text><path d="M18 14l6 5-6 5z" fill="#a028b8"/></svg></button><button class="drop over" aria-label="选项"></button>
</div>
<div class="group"><i class="grip"></i><button class="tool" aria-label="齿轮"><svg class="ic"><use href="#cyl1"/></svg></button><button class="tool" aria-label="锥齿轮"><svg class="ic"><use href="#cyl2"/></svg></button><button class="tool" aria-label="选取"><svg class="ic"><use href="#hand"/></svg></button><button class="drop over" aria-label="选项"></button></div>
<div class="group"><i class="grip"></i><button class="tool" aria-label="压缩弹簧"><svg class="ic"><use href="#coil"/></svg></button><button class="tool" aria-label="拉伸弹簧"><svg class="ic"><use href="#spring"/></svg></button><button class="tool" aria-label="碟簧"><svg class="ic"><use href="#disc"/></svg></button><i class="sep"></i><button class="tool" aria-label="删除弹簧"><svg class="ic"><use href="#springx"/></svg></button><button class="drop over" aria-label="选项"></button></div>
<div class="group gap-l"><i class="grip"></i><button class="tool" aria-label="三角"><svg class="ic"><use href="#tri"/></svg></button><button class="tool" aria-label="表格"><svg class="ic"><use href="#tabletri"/></svg></button><button class="tool" aria-label="点集"><svg class="ic"><use href="#folderpts"/></svg></button><button class="tool" aria-label="圆集"><svg class="ic"><use href="#foldercir"/></svg></button><button class="drop over" aria-label="选项"></button></div>
<div class="group gap-m"><i class="grip"></i><button class="tool" aria-label="锁定"><svg class="ic"><use href="#lockbox"/></svg></button><button class="tool" aria-label="解锁"><svg class="ic"><use href="#lockbox"/></svg></button><button class="drop over" aria-label="选项"></button></div>
</div>

<div class="row render">
<div class="group"><i class="grip"></i><button class="tool" aria-label="检查"><svg class="ic"><use href="#plugok"/></svg></button><button class="tool" aria-label="树"><svg class="ic"><use href="#plugtree"/></svg></button><button class="tool" aria-label="表"><svg class="ic"><use href="#plugtable"/></svg></button><button class="tool" aria-label="坐标系"><svg class="ic"><use href="#csys"/></svg></button><button class="drop over" aria-label="选项"></button></div>
<div class="group gap-xl"><i class="grip"></i>
<button class="big"><svg class="ic"><use href="#ball"/></svg>真实着色</button>
<button class="big dim"><svg class="ic"><use href="#sphere"/></svg>光亮金属刷色</button><button class="drop" aria-label="更多"></button>
<button class="big dim"><svg class="ic"><use href="#sphere"/></svg>红色亮泽塑料</button><button class="drop" aria-label="更多"></button>
<button class="big dim"><svg class="ic"><use href="#squareno"/></svg>无全局反射图</button><button class="drop" aria-label="更多"></button>
<button class="big dim"><svg class="ic"><use href="#square"/></svg>渐变深灰色背景</button><button class="drop" aria-label="更多"></button>
<button class="big picked"><svg class="ic"><use href="#bulb"/></svg>显示阴影</button>
<button class="big dim"><svg class="ic"><use href="#reflect"/></svg>显示地板反射</button><button class="big dim"><svg class="ic"><use href="#floorgrid"/></svg>显示地板栅格</button><button class="big dim"><svg class="ic"><use href="#floorno"/></svg>无</button>
</div>
</div>

<div class="row filters">
<label class="combo filter"><select aria-label="选择过滤器"><option>没有选择过滤器</option></select></label>
<label class="combo scope"><select aria-label="选择范围"><option>整个装配</option></select></label>
<button class="snap" aria-label="选择"><svg><use href="#f1"/></svg></button><i class="sep"></i>
<button class="snap" aria-label="过滤"><svg><use href="#f2"/></svg></button><button class="snap" aria-label="重置"><svg><use href="#f3"/></svg></button><button class="snap" aria-label="查找"><svg><use href="#f4"/></svg></button><i class="sep"></i>
<button class="snap" aria-label="线框"><svg><use href="#f5"/></svg></button><button class="snap" aria-label="实体"><svg><use href="#f6"/></svg></button><i class="sep"></i>
<button class="snap on" aria-label="端点"><svg><use href="#s1"/></svg></button><button class="snap on" aria-label="中点"><svg><use href="#s2"/></svg></button><button class="snap" aria-label="控制点"><svg><use href="#s3"/></svg></button><button class="snap" aria-label="交点"><svg><use href="#s4"/></svg></button><button class="snap on" aria-label="圆心"><svg><use href="#s5"/></svg></button><button class="snap" aria-label="象限点"><svg><use href="#s6"/></svg></button><button class="snap on" aria-label="现有点"><svg><use href="#s7"/></svg></button><button class="snap on" aria-label="曲线上的点"><svg><use href="#s8"/></svg></button><button class="snap" aria-label="面上的点"><svg><use href="#s9"/></svg></button><i class="sep"></i>
<button class="snap" aria-label="栅格点"><svg><use href="#s10"/></svg></button>
</div>

<div class="row status"><div class="cue"></div><div class="msg">体(0) 已选定</div></div>

<main class="work">
<aside class="tabs">
<button class="tab" aria-label="装配导航器"><svg class="ic"><use href="#tabassy"/></svg></button>
<button class="tab" aria-label="约束导航器"><svg class="ic"><use href="#tabcons"/></svg></button>
<button class="tab on" aria-label="部件导航器"><svg class="ic"><use href="#tabpart"/></svg></button>
<button class="tab" aria-label="重用库"><svg class="ic"><use href="#books"/></svg></button>
<button class="tab apart" aria-label="信息"><svg class="ic"><use href="#info"/></svg></button>
<button class="tab apart" aria-label="浏览器"><svg class="ic"><use href="#webpage"/></svg></button>
<button class="tab apart" aria-label="历史记录"><svg class="ic"><use href="#clock"/></svg></button>
<button class="tab" aria-label="角色"><svg class="ic"><use href="#roles"/></svg></button>
<button class="tab" aria-label="可视化"><svg class="ic"><use href="#rainbow"/></svg></button>
<svg class="curl" viewBox="0 0 26 8"><path d="M0 2q4 5 10 2t16-2" fill="none" stroke="#eee" stroke-width="2"/><path d="M0 4q4 5 10 2t16-2" fill="none" stroke="#555"/></svg>
<button class="pager" aria-label="首个"><svg viewBox="0 0 15 15"><path d="M3 4h9M7.500 6l4 4h-8z" fill="#aaa" stroke="#aaa"/></svg></button>
<button class="pager" aria-label="上移"><svg viewBox="0 0 15 15"><path d="M7.500 5l4 4h-8z" fill="#aaa"/></svg></button>
<button class="pager" aria-label="下移"><svg viewBox="0 0 15 15"><path d="M7.500 10l4-4h-8z" fill="#333"/></svg></button>
<button class="pager" aria-label="末个"><svg viewBox="0 0 15 15"><path d="M3 11.500h9M7.500 9l4-4h-8z" fill="#333" stroke="#333"/></svg></button>
</aside>

<section class="panel">
<h2 class="title"><svg class="pin"><use href="#pin"/></svg>部件导航器</h2>
<div class="treebox">
<div class="treemain">
<div class="treeclip">
<table class="tree">
<colgroup><col class="cname"><col></colgroup>
<thead><tr><th>名称<i class="sort"></i></th><th>附注</th></tr></thead>
<tbody>
<tr><td><div class="cell"><i class="node first"></i><svg class="ic16"><use href="#clock"/></svg><span>历史记录模式</span></div></td><td></td></tr>
<tr><td><div class="cell"><i class="node plus"></i><svg class="ic16"><use href="#tview"/></svg><span>模型视图</span></div></td><td></td></tr>
<tr><td><div class="cell"><i class="node plus"></i><svg class="ic16"><use href="#tcheck"/></svg><svg class="ic16"><use href="#tcam"/></svg><span>摄像机</span></div></td><td></td></tr>
<tr><td><div class="cell"><i class="node plus"></i><svg class="ic16"><use href="#clock"/></svg><svg class="ic16"><use href="#tdraw"/></svg><span>图纸</span></div></td><td></td></tr>
<tr><td><div class="cell"><i class="node plus"></i><svg class="ic16"><use href="#tfolderx"/></svg><span>用户表达式</span></div></td><td></td></tr>
<tr><td><div class="cell"><i class="node plus"></i><svg class="ic16"><use href="#tfolder"/></svg><span>组</span></div></td><td></td></tr>
<tr><td><div class="cell"><i class="node minus"></i><svg class="ic16"><use href="#tfolder"/></svg><span>模型历史记录</span></div></td><td></td></tr>
<tr class="sel"><td><label class="cell"><i class="branch"></i><input type="checkbox" checked><svg class="ic16"><use href="#tbody"/></svg><span>体 (0)</span></label></td><td></td></tr>
<tr><td><label class="cell"><i class="branch"></i><input type="checkbox" checked><svg class="ic16"><use href="#tbody"/></svg><span>体 (1)</span></label></td><td></td></tr>
<tr><td><label class="cell"><i class="branch"></i><input type="checkbox" checked><svg class="ic16"><use href="#tbody"/></svg><span>体 (2)</span></label></td><td></td></tr>
<tr><td><label class="cell"><i class="branch"></i><input type="checkbox" checked><svg class="ic16"><use href="#tbody"/></svg><span>体 (3)</span></label></td><td></td></tr>
<tr><td><label class="cell"><i class="branch"></i><input type="checkbox" checked><svg class="ic16"><use href="#tbody"/></svg><span>体 (4)</span></label></td><td></td></tr>
<tr><td><label class="cell"><i class="branch"></i><input type="checkbox" checked><svg class="ic16"><use href="#tbody"/></svg><span>体 (5)</span></label></td><td></td></tr>
<tr><td><label class="cell"><i class="branch"></i><input type="checkbox" checked><svg class="ic16"><use href="#tbody"/></svg><span>体 (6)</span></label></td><td></td></tr>
<tr><td><label class="cell"><i class="branch"></i><input type="checkbox" checked><svg class="ic16"><use href="#tbody"/></svg><span>体 (7)</span></label></td><td></td></tr>
<tr><td><label class="cell"><i class="branch"></i><input type="checkbox" checked><svg class="ic16"><use href="#tbody"/></svg><span>体 (8)</span></label></td><td></td></tr>
<tr><td><label class="cell"><i class="branch"></i><input type="checkbox" checked><svg class="ic16"><use href="#tbody"/></svg><span>体 (9)</span></label></td><td></td></tr>
<tr><td><label class="cell"><i class="branch"></i><input type="checkbox" checked><svg class="ic16"><use href="#tbody"/></svg><span>体 (10)</span></label></td><td></td></tr>
</tbody>
</table>
</div>
<div class="vscroll"><i class="corner"></i><i class="arrow up"></i><i class="thumb"></i><i class="arrow down"></i></div>
</div>
<div class="hscroll"><i class="arrow left"></i><div class="track"><i class="thumb"><b></b></i></div><i class="arrow right"></i></div>
</div>
<div class="splitter"><i></i></div>
<button class="fold">相依性<svg viewBox="0 0 12 12"><path d="M2 2l4 7 4-7" fill="none" stroke="#555" stroke-width="2"/></svg></button>
<button class="fold">细节<svg viewBox="0 0 12 12"><path d="M2 2l4 7 4-7" fill="none" stroke="#555" stroke-width="2"/></svg></button>
<button class="fold">预览<svg viewBox="0 0 12 12"><path d="M2 2l4 7 4-7" fill="none" stroke="#555" stroke-width="2"/></svg></button>
</section>

<section class="viewport">
<svg viewBox="357 289 639 507">
<defs>
<clipPath id="bore"><ellipse cx="682" cy="419" rx="39" ry="21"/></clipPath>
<pattern id="turns" width="34" height="5" patternUnits="userSpaceOnUse" x="551" y="620"><path d="M0 0h34v5H0z" fill="#08084c"/><path d="M0 1q17 5 34 0" fill="none" stroke="#4040f8" stroke-width="2"/></pattern>
<clipPath id="gapclip"><path d="M531 617L670 660V699L535 663z"/></clipPath>
</defs>
<g stroke="#000" stroke-width="1.500" stroke-linejoin="round">
<path d="M472 671L491 657L902 599L923 606L740 754z" fill="#fff"/>
<path d="M472 671L740 754V777L472 693z" fill="#a9a9a9"/>
<path d="M740 754L923 606L925 629L740 777z" fill="#d4d6d6"/>
<path d="M711 673L897 525L902 599L716 747z" fill="#d4d6d6"/>
<path d="M531 617L670 660V733L535 691z" fill="#fff" stroke="none"/>
<path d="M531 617L551 623V642L535 654z" fill="#cfd1d1" stroke-width="1"/>
<path d="M535 655L670 696V710L535 669z" fill="#7f8998"/>
<path d="M535 669L670 710L671 729L537 688z" fill="#988490"/>
</g>
<g clip-path="url(#gapclip)" stroke="#000">
<path d="M551 615h33v36q-16 9-33 0z" fill="url(#turns)" stroke="none"/><ellipse cx="549" cy="652" rx="4" ry="2" fill="#3030e8"/>
<path d="M649 645h24v44q-14 0-23-6z" fill="url(#turns)" stroke="none"/><ellipse cx="665" cy="689" rx="4" ry="2" fill="#3030e8"/>
</g>
<g stroke="#000" stroke-width="1.500" stroke-linejoin="round">
<path d="M488 604L531 617L535 691L492 677z" fill="#a9a9a9"/>
<path d="M670 660L711 673L716 747L673 733z" fill="#a9a9a9"/>
<path d="M535 620V691M670 660L673 733" fill="none" stroke-width="2.500"/>
<path d="M481 492L704 560L707 612L484 544z" fill="#6282a2"/>
<path d="M704 560L891 437L893 463L707 612z" fill="#82aede"/>
<path d="M484 544L707 612L711 673L488 604z" fill="#a05c60"/>
<path d="M707 612L893 463L897 525L711 673z" fill="#d87878"/>
<path d="M484 543.500L707 612L893 463" fill="none" stroke-width="2.500"/>
<path d="M571 584L578 586L592 588V598L597 601V604L568 596V593z" fill="#ffb4b4"/>
<path d="M569 561L591 568L592 588L570 583z" fill="#666"/><path d="M571 584v7l5-5z" fill="#d87070"/>
<path d="M458 462L725 545L726 568L458 484z" fill="#a8a8a8"/>
<path d="M725 545L910 396L911 418L726 568z" fill="#d5d7d7"/>
<path d="M458 461L642 312L909 396L725 544z" fill="#fff"/>
</g>
<g stroke="#000" stroke-width="2">
<g id="bolt"><ellipse cx="641" cy="362" rx="12" ry="6.500" fill="#18d818"/><ellipse cx="641" cy="362" rx="7" ry="4" fill="#0fb00f" stroke-width="1.200"/><path d="M638 359h6v5h-6z" fill="#087808" stroke-width="1"/></g>
<use href="#bolt" x="-96" y="76"/><use href="#bolt" x="179" y="56"/><use href="#bolt" x="84" y="132"/>
</g>
<g stroke="#000" stroke-width="1.800">
<path d="M628 419v9a54.500 28 0 0 0 109 0v-9z" fill="#087458"/>
<ellipse cx="682.500" cy="419" rx="54.500" ry="28" fill="#10c498"/>
<g clip-path="url(#bore)"><path d="M640 395h85v50h-85z" fill="#087458"/><ellipse cx="683" cy="432" rx="37" ry="20" fill="#fff"/><ellipse cx="684" cy="438" rx="16" ry="5" fill="#9cc830"/></g>
<ellipse cx="682" cy="419" rx="39" ry="21" fill="none"/>
<ellipse cx="643" cy="407" rx="6" ry="3" fill="#063"/><ellipse cx="720" cy="431" rx="6" ry="3" fill="#063"/>
</g>
<path d="M684 455l4 16h-6z" fill="#4060c8"/><path d="M687 470v28" stroke="#4060c8" stroke-width="1.500"/>
<path d="M642 488l14 1 29 13-27-5z" fill="#e09898" stroke="#b06060" stroke-width=".5"/><path d="M685 505l-10 14-17 8 8-12z" fill="#a8dca8" stroke="#70a070" stroke-width=".5"/>
<path d="M672 480l5-5 4 0 4-7 11 2 22 6 9-4 28 9 1 16-8-2-10-3-12 4-23-3-19-5-7-1-5-3z" fill="#f89838"/><path d="M695 477l16 5-3 5-16-5zM730 480l6 2M742 483l6 2" fill="#fff" stroke="#fff"/><path d="M716 492l16-3" stroke="#111" stroke-dasharray="4 3"/>
<g class="axis"><text x="689" y="454" fill="#0c50ff">ZC</text><text x="642" y="484" fill="#c83838">XC</text><text x="657" y="541" fill="#38a038">YC</text></g>
<path d="M376 732l10-5 14 4v17l-12 7-12-4z" fill="#aaa"/><path d="M376 732l12 5 12-6M388 737v18" fill="none" stroke="#ccc"/><path d="M376 741l26 6" stroke="#d09090" stroke-width="1.500"/>
<path d="M402 747v-16" stroke="#1848e0" stroke-width="2.500"/><path d="M401 722l4 10h-7z" fill="#1848e0"/><path d="M402 748l-9 9" stroke="#38a038" stroke-width="2"/><path d="M384 762l7-9 5 5z" fill="#38a038"/><circle cx="403" cy="747" r="4" fill="#e8e8e8"/>
<g class="axis small"><text x="396" y="722" fill="#1848e0">Z</text><text x="369" y="743" fill="#c83838">X</text><text x="377" y="769" fill="#38a038">Y</text></g>
</svg>
</section>
</main>

<div class="row sketch">
<div class="group"><i class="grip"></i>
<button class="tool" aria-label="草图"><svg class="ic"><use href="#k1"/></svg></button><button class="tool labeled dim"><svg class="ic"><use href="#k2"/></svg>完成草图</button>
<button class="tool" aria-label="轮廓"><svg class="ic"><use href="#k3"/></svg></button><button class="tool" aria-label="直线"><svg class="ic"><use href="#k4"/></svg></button><button class="tool" aria-label="圆弧"><svg class="ic"><use href="#k5"/></svg></button><button class="tool" aria-label="圆"><svg class="ic"><use href="#k6"/></svg></button><button class="tool" aria-label="圆角"><svg class="ic"><use href="#k7"/></svg></button><button class="tool" aria-label="倒斜角"><svg class="ic"><use href="#k8"/></svg></button><button class="tool" aria-label="矩形"><svg class="ic"><use href="#k9"/></svg></button><button class="tool" aria-label="样条"><svg class="ic"><use href="#k10"/></svg></button><button class="tool" aria-label="点"><svg class="ic"><use href="#k11"/></svg></button><button class="tool" aria-label="偏置曲线"><svg class="ic"><use href="#k12"/></svg></button><button class="drop" aria-label="更多"></button><i class="sep"></i>
<button class="tool" aria-label="快速修剪"><svg class="ic"><use href="#k13"/></svg></button><button class="tool" aria-label="快速延伸"><svg class="ic"><use href="#k14"/></svg></button><i class="sep"></i>
<button class="tool" aria-label="尺寸"><svg class="ic"><use href="#k15"/></svg></button><button class="drop" aria-label="更多"></button><i class="sep"></i>
<button class="tool" aria-label="几何约束"><svg class="ic"><use href="#k16"/></svg></button><button class="tool" aria-label="自动约束"><svg class="ic"><use href="#k17"/></svg></button><button class="drop" aria-label="更多"></button><button class="drop over" aria-label="选项"></button>
</div>
</div>
<div class="footstrip"></div>
</div>
</body>
</html>
```
FILE: styles.css
```css
* { box-sizing: border-box; }
html, body { height: 100%; }
body {
  margin: 0;
  overflow: hidden;
  background: #d2d5d4;
  color: #000;
  font: 12px/16px "Noto Sans", "Noto Sans CJK SC", sans-serif;
}
button {
  margin: 0;
  padding: 0;
  border: 0;
  background: none;
  color: inherit;
  font: inherit;
}
svg { display: block; flex: none; }
i { display: block; font-style: normal; }
.sprite { position: absolute; width: 0; height: 0; }
.ic { width: 24px; height: 24px; overflow: visible; }
.ic16 { width: 16px; height: 16px; }
.abc { font: bold 7px "Liberation Sans", sans-serif; }

.app { display: flex; flex-direction: column; height: 100vh; }
.titlestrip { flex: none; height: 5px; background: #1c1c20; border-bottom: 1px solid #f4f4f4; }
.row { display: flex; flex: none; overflow: hidden; border-bottom: 1px solid #f6f6f6; }
.group { display: flex; flex: none; align-items: center; border-right: 1px solid #b8b4bc; }
.group + .group { border-left: 1px solid #fff; }
.group.grow { flex: 1; }
.gap-l { margin-left: 96px; }
.gap-m { margin-left: 31px; }
.gap-xl { margin-left: 102px; }
.grip {
  flex: none;
  align-self: stretch;
  width: 3px;
  margin: 4px 1px 4px 3px;
  background: repeating-linear-gradient(#a2a2a2 0 2px, #f4f4f4 2px 3px, transparent 3px 5px);
}
.sep { flex: none; align-self: stretch; width: 6px; margin: 1px 0; background: linear-gradient(90deg, transparent 2px, #b6b6b6 2px 3px, #fff 3px 4px, transparent 4px); }
.tool { display: flex; flex: none; width: 31px; height: 28px; align-items: center; justify-content: center; }
.tool.labeled { width: auto; gap: 3px; padding: 0 3px; }
.start { display: flex; align-items: center; gap: 3px; padding: 0 3px 0 2px; }
.caret { width: 7px; height: 4px; background: #000; clip-path: polygon(0 0, 100% 0, 50% 100%); }
.drop { display: flex; flex: none; align-self: stretch; align-items: center; justify-content: center; width: 12px; }
.drop::before { content: ""; width: 7px; height: 4px; background: #000; clip-path: polygon(0 0, 100% 0, 50% 100%); }
.drop.over { align-items: flex-end; padding-bottom: 6px; }
.dim { color: #969896; }

.menubar { align-items: center; height: 27px; background: #e0e2e1; border-bottom-color: #b8bab9; }
.menu { padding: 2px 6px 3px; border: 1px solid transparent; border-radius: 3px; margin-right: -2px; white-space: nowrap; }
.menu.on { border-color: #a4a6a6; }

.tools { height: 34px; background: linear-gradient(#e2e4e3, #d2d4d3); }
.tools2 { background: #d2d5d4; }
.ribbon { height: 67px; background: linear-gradient(#dcdedd, #d2d4d3); }
.big { display: flex; flex: none; flex-direction: column; align-items: center; width: 80px; height: 64px; gap: 4px; padding-top: 4px; line-height: 15px; }
.split { display: flex; border: 1px solid #acaeae; border-radius: 3px; }
.split .big { width: 79px; height: 62px; padding-top: 3px; }
.split .drop { width: 11px; border-left: 1px solid #b8baba; }

.render { height: 69px; background: #cfd2d1; border-bottom: 2px solid #96989a; }
.render .big { padding-top: 4px; }
.render .big + .drop { align-items: flex-start; padding-top: 30px; }
.picked { background: #fff; border: 1px solid #55505c; border-radius: 3px; }
.render .picked { padding-top: 3px; }

.filters { align-items: center; height: 29px; padding-left: 5px; background: #d0d3d2; }
.combo { position: relative; flex: none; height: 20px; margin-right: 9px; }
.combo select {
  width: 100%;
  height: 100%;
  padding: 0 18px 1px 0;
  border: 1px solid #55585c;
  border-radius: 3px;
  background: #fff;
  color: #000;
  font: inherit;
  appearance: none;
}
.combo.filter { width: 142px; }
.combo.scope { width: 151px; margin-right: 4px; }
.combo::after {
  content: "";
  position: absolute;
  top: 1px;
  right: 1px;
  width: 16px;
  height: 18px;
  border-radius: 0 2px 2px 0;
  background: linear-gradient(#d4ecfc, #58a4e8);
  pointer-events: none;
}
.combo::before {
  content: "";
  position: absolute;
  z-index: 1;
  top: 7px;
  right: 4px;
  width: 11px;
  height: 7px;
  background: #10141c;
  clip-path: polygon(0 0, 100% 0, 50% 100%);
  pointer-events: none;
}
.snap { display: flex; flex: none; align-items: center; justify-content: center; width: 23px; height: 22px; border: 1px solid transparent; }
.snap svg { width: 20px; height: 20px; }
.snap.on { background: #fff; border-color: #66646c; border-radius: 3px; }

.status { height: 24px; background: #d8dbda; border-bottom: 2px solid #8c8e8e; font-weight: bold; line-height: 22px; }
.cue { width: 61%; border-right: 1px solid #fff; }
.msg { padding-left: 2px; }

.work { display: flex; flex: 1; min-height: 0; }
.tabs { display: flex; flex: none; flex-direction: column; align-items: flex-end; gap: 2px; width: 32px; padding: 16px 0 0; background: linear-gradient(90deg, #b4b6b6, #8e9090); }
.tab { display: flex; flex: none; align-items: center; justify-content: center; width: 27px; height: 40px; border: 1px solid #74767a; border-right: 0; border-radius: 4px 0 0 4px; background: linear-gradient(90deg, #e0e2e2, #c4c6c6); }
.tab.on { width: 29px; height: 42px; background: #ebedec; }
.tab.apart { margin-top: 12px; }
.curl { width: 27px; height: 8px; }
.pager { align-self: flex-start; width: 15px; height: 14px; margin: 0 0 0 9px; border: 1px solid #9a9c9c; background: #e8e8e8; }
.pager svg { width: 13px; height: 12px; }

.panel { display: flex; flex: none; flex-direction: column; width: 325px; padding: 0 10px 5px 9px; background: #ebedec; border-right: 1px solid #8c8e8e; }
.title { display: flex; align-items: center; gap: 12px; height: 30px; margin: 0; padding-left: 6px; font-size: 13px; font-weight: bold; }
.pin { width: 12px; height: 12px; }
.treebox { display: flex; flex: 1; flex-direction: column; min-height: 0; border: 1px solid #66686c; background: #fff; }
.treemain { display: flex; flex: 1; min-height: 0; }
.treeclip { flex: 1; overflow: hidden; }
.tree { width: 100%; table-layout: fixed; border-collapse: collapse; }
.cname { width: 201px; }
.tree th { height: 20px; padding: 0 0 0 6px; background: linear-gradient(#f4f5f5 45%, #d4d6d6 55%, #e0e2e2); border-right: 1px solid #a4a6a6; border-bottom: 1px solid #88898a; font-weight: normal; text-align: left; }
.sort { display: inline-block; width: 10px; height: 6px; margin-left: 16px; vertical-align: 2px; background: #222; clip-path: polygon(50% 0, 100% 100%, 0 100%); }
.tree td { height: 20px; padding: 0; border-right: 1px solid #d4d8d4; border-bottom: 1px solid #d4d6d4; color: #333; }
.tree tr > :last-child { border-right: 0; }
.tree tbody tr:nth-child(even) { background: #f6f7f6; }
.cell { display: flex; align-items: center; height: 19px; }
.cell span { flex: 1; padding-left: 2px; line-height: 19px; }
.node { flex: none; align-self: stretch; width: 20px; background: linear-gradient(90deg, #aaa 1px, transparent 1px) 9px 10px / 2px 1px repeat-x, linear-gradient(#aaa 1px, transparent 1px) 9px 0 / 1px 2px repeat-y; clip-path: inset(0 0 0 5px); }
.node.first { background: linear-gradient(90deg, #aaa 1px, transparent 1px) 9px 10px / 2px 1px repeat-x; clip-path: inset(0 0 0 9px); }
.node.plus, .node.minus { position: relative; }
.node.plus::before, .node.minus::before { content: "+"; position: absolute; top: 5px; left: 5px; width: 9px; height: 9px; border: 1px solid #888; border-radius: 1px; background: #fff; color: #222; font-size: 10px; line-height: 7px; text-align: center; }
.node.minus::before { content: "−"; }
.branch { flex: none; align-self: stretch; width: 39px; margin-right: 2px; background: linear-gradient(90deg, #aaa 1px, transparent 1px) 0 10px / 2px 1px repeat-x, linear-gradient(#aaa 1px, transparent 1px) 29px 0 / 1px 2px repeat-y; clip-path: inset(0 0 0 29px); }
.cell input { flex: none; width: 12px; height: 12px; margin: 0 2px 0 0; border: 1px solid #111; background: #fff; appearance: none; display: grid; place-items: center; }
.cell input:checked::before { content: ""; width: 10px; height: 9px; background: #10b020; clip-path: polygon(0 45%, 20% 35%, 38% 60%, 85% 0, 100% 20%, 40% 100%); }
.tree .sel span, .tree .sel td + td { background: #3399f4; color: #fff; }
.vscroll { display: flex; flex: none; flex-direction: column; align-items: center; width: 18px; border-left: 1px solid #ddd; background: #f0f1f1; }
.corner { width: 17px; height: 20px; background: #aeb4b0; }
.arrow { flex: none; width: 7px; height: 4px; background: #333; }
.arrow.up { margin: 7px 0; clip-path: polygon(50% 0, 100% 100%, 0 100%); }
.arrow.down { margin: auto 0 6px; clip-path: polygon(0 0, 100% 0, 50% 100%); }
.vscroll .thumb { width: 14px; height: 15px; border: 1px solid #94969a; border-radius: 2px; background: linear-gradient(90deg, #f4f4f4, #ccc); }
.hscroll { display: flex; flex: none; align-items: center; height: 18px; padding: 0 25px 0 6px; background: #eff0f0; }
.arrow.left { width: 4px; height: 7px; clip-path: polygon(100% 0, 100% 100%, 0 50%); }
.arrow.right { width: 4px; height: 7px; clip-path: polygon(0 0, 100% 50%, 0 100%); }
.track { flex: 1; margin: 0 22px 0 9px; }
.hscroll .thumb { display: flex; align-items: center; justify-content: center; height: 15px; border: 1px solid #8e9094; border-radius: 2px; background: linear-gradient(#f0f0f0, #c8caca); }
.thumb b { width: 8px; height: 6px; background: repeating-linear-gradient(90deg, #555 0 1px, transparent 1px 3px); }
.splitter { display: flex; flex: none; align-items: center; justify-content: center; height: 12px; background: linear-gradient(#b0b2b2, #b0b2b2) center / 100% 1px no-repeat; }
.splitter i { width: 54px; height: 5px; border: 1px solid #a8aaaa; background: #cfd1d1; }
.fold { display: flex; flex: none; align-items: center; justify-content: space-between; height: 23px; padding: 0 0 0 7px; background: linear-gradient(#f4f5f4 35%, #d4d7d5); border-bottom: 1px solid #98a498; font-weight: bold; text-align: left; }
.fold svg { width: 23px; height: 20px; padding: 3px 0; border-left: 1px solid #a8aaaa; }

.viewport { flex: 1; min-width: 0; background: #000; }
.viewport svg { width: 100%; height: 100%; }
.axis { font: 14px "Liberation Sans", sans-serif; }
.axis.small { font-size: 12px; }

.sketch { height: 34px; padding-left: 149px; background: linear-gradient(#eceeed, #cdd0cf); border-top: 1px solid #fff; border-bottom: 0; }
.sketch .group { border-left: 1px solid #fff; }
.footstrip { flex: none; height: 2px; background: #2c242c; }
```
